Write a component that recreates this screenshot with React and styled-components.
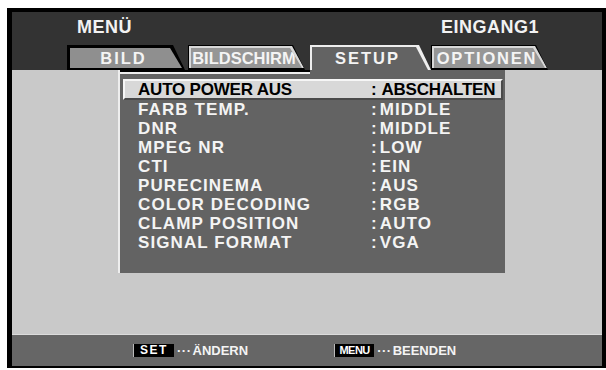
import React from 'react'
import styled, { createGlobalStyle } from 'styled-components';

const GlobalStyle = createGlobalStyle`
    body {
        margin: 0;
        background: #fff;
    }
`;

const Screen = styled.div`
    box-sizing: border-box;
    margin: 8px 0 0 7px;
    width: 599px;
    height: 360px;
    border: solid #000;
    border-width: 4px 4px 2px 5px;
    background: #333;
    display: flex;
    flex-direction: column;
    font-family: "Liberation Sans", Arial, sans-serif;
    font-weight: bold;
`;

const Header = styled.div`
    box-sizing: border-box;
    height: 33px;
    padding: 6px 63px 0 65px;
    display: flex;
    justify-content: space-between;
    color: #f2f2f2;
    font-size: 18px;
    line-height: 18px;
    letter-spacing: 0.5px;
`;

const TabRow = styled.div`
    height: 25px;
    padding-left: 55px;
    display: flex;
    align-items: stretch;
`;

const TabEdge = styled.div`
    box-sizing: border-box;
    width: ${props => props.width}px;
    margin-left: ${props => props.gap || 0}px;
    padding: ${props => props.active ? "0" : "1px 0 2px 1px"};
    background: ${props => props.edge};
    clip-path: polygon(0 0, calc(100% - 12px) 0, 100% 100%, 0 100%);
    display: flex;
`;

const TabRim = styled.div`
    box-sizing: border-box;
    flex: 1;
    padding: 2px 0 0 2px;
    background: ${props => props.rim};
    clip-path: polygon(0 0, calc(100% - 13px) 0, calc(100% - 1px) 100%, 0 100%);
    display: flex;
`;

const TabFace = styled.div`
    flex: 1;
    background: ${props => props.face};
    clip-path: polygon(0 0, calc(100% - 15px) 0, calc(100% - 3px) 100%, 0 100%);
    display: flex;
    align-items: center;
    justify-content: center;
    padding-right: ${props => props.shift || 0}px;
    color: #f4f4f4;
    font-size: 16.5px;
    letter-spacing: ${props => props.spacing}px;
    white-space: nowrap;
`;

const Main = styled.div`
    flex: 1;
    background: #c9c9c9;
    padding-left: 106px;
`;

const Panel = styled.div`
    box-sizing: border-box;
    width: 387px;
    height: 203px;
    border-left: 2px solid #eee;
    padding: 9px 2px 0 3px;
    background:
        linear-gradient(#000, #000) 0 0 / 190px 2px no-repeat,
        linear-gradient(#eee, #eee) 0 2px / 190px 2px no-repeat,
        #636363;
`;

const Row = styled.div`
    box-sizing: border-box;
    height: ${props => props.selected ? 21 : 19}px;
    display: flex;
    align-items: center;
    padding-left: 13px;
    border: 2px solid transparent;
    border-top-width: ${props => props.selected ? 2 : 0}px;
    border-bottom-width: ${props => props.selected ? 2 : 0}px;
    ${props => props.selected && `
        background: #d8d8d8;
        border-color: #f6f6f6 #4a4a4a #4a4a4a #f6f6f6;
    `}
    color: ${props => props.selected ? "#000" : "#f4f4f4"};
    font-size: 17px;
    letter-spacing: ${props => props.selected ? -0.2 : 1.1}px;
    white-space: nowrap;
`;

const Label = styled.span`
    width: 233px;
`;

const Colon = styled.span`
    margin-right: ${props => props.selected ? 5 : 2}px;
`;

const Footer = styled.div`
    box-sizing: border-box;
    height: 32px;
    border-top: 1px solid #dcdcdc;
    background: #666;
    display: flex;
    align-items: center;
    padding-left: 121px;
    color: #f4f4f4;
    font-size: 13px;
`;

const Hint = styled.div`
    display: flex;
    align-items: center;
    margin-right: ${props => props.gap || 0}px;
`;

const Key = styled.span`
    box-sizing: border-box;
    width: ${props => props.width}px;
    height: 13px;
    display: flex;
    align-items: center;
    justify-content: center;
    background: #000;
    border-left: 1px solid #bbb;
    color: #fff;
    font-size: ${props => props.size}px;
    letter-spacing: ${props => props.spacing}px;
    line-height: 13px;
`;

const Dots = styled.span`
    margin: 0 1px 0 3px;
    letter-spacing: 0.5px;
`;

const tabs = [
    { label: "BILD", width: 118, gap: 0, edge: "#000", rim: "#000", face: "#8f8f8f", spacing: 2 },
    { label: "BILDSCHIRM", width: 117, gap: 3, edge: "#000", rim: "#d8d8d8", face: "#969696", spacing: 0 },
    { label: "SETUP", width: 121, gap: 5, edge: "#eee", rim: "#eee", face: "#636363", spacing: 2, active: true },
    { label: "OPTIONEN", width: 117, gap: 0, edge: "#000", rim: "#d8d8d8", face: "#969696", spacing: 1.8 },
];

const items = [
    ["AUTO POWER AUS", "ABSCHALTEN"],
    ["FARB TEMP.", "MIDDLE"],
    ["DNR", "MIDDLE"],
    ["MPEG NR", "LOW"],
    ["CTI", "EIN"],
    ["PURECINEMA", "AUS"],
    ["COLOR DECODING", "RGB"],
    ["CLAMP POSITION", "AUTO"],
    ["SIGNAL FORMAT", "VGA"],
];

export default function App() {
    return (
        <>
            <GlobalStyle />
            <Screen>
                <Header>
                    <span>MENÜ</span>
                    <span>EINGANG1</span>
                </Header>
                <TabRow>
                    {tabs.map(t => (
                        <TabEdge key={t.label} width={t.width} gap={t.gap} edge={t.edge} active={t.active}>
                            <TabRim rim={t.rim}>
                                <TabFace face={t.face} spacing={t.spacing} shift={8}>{t.label}</TabFace>
                            </TabRim>
                        </TabEdge>
                    ))}
                </TabRow>
                <Main>
                    <Panel>
                        {items.map(([label, value], i) => (
                            <Row key={label} selected={i === 0}>
                                <Label>{label}</Label>
                                <Colon selected={i === 0}>:</Colon>
                                <span>{value}</span>
                            </Row>
                        ))}
                    </Panel>
                </Main>
                <Footer>
                    <Hint gap={86}>
                        <Key width={41} size={12} spacing={1.5}>SET</Key>
                        <Dots>···</Dots>
                        <span>ÄNDERN</span>
                    </Hint>
                    <Hint>
                        <Key width={40} size={11} spacing={-0.5}>MENU</Key>
                        <Dots>···</Dots>
                        <span>BEENDEN</span>
                    </Hint>
                </Footer>
            </Screen>
        </>
    );
}
